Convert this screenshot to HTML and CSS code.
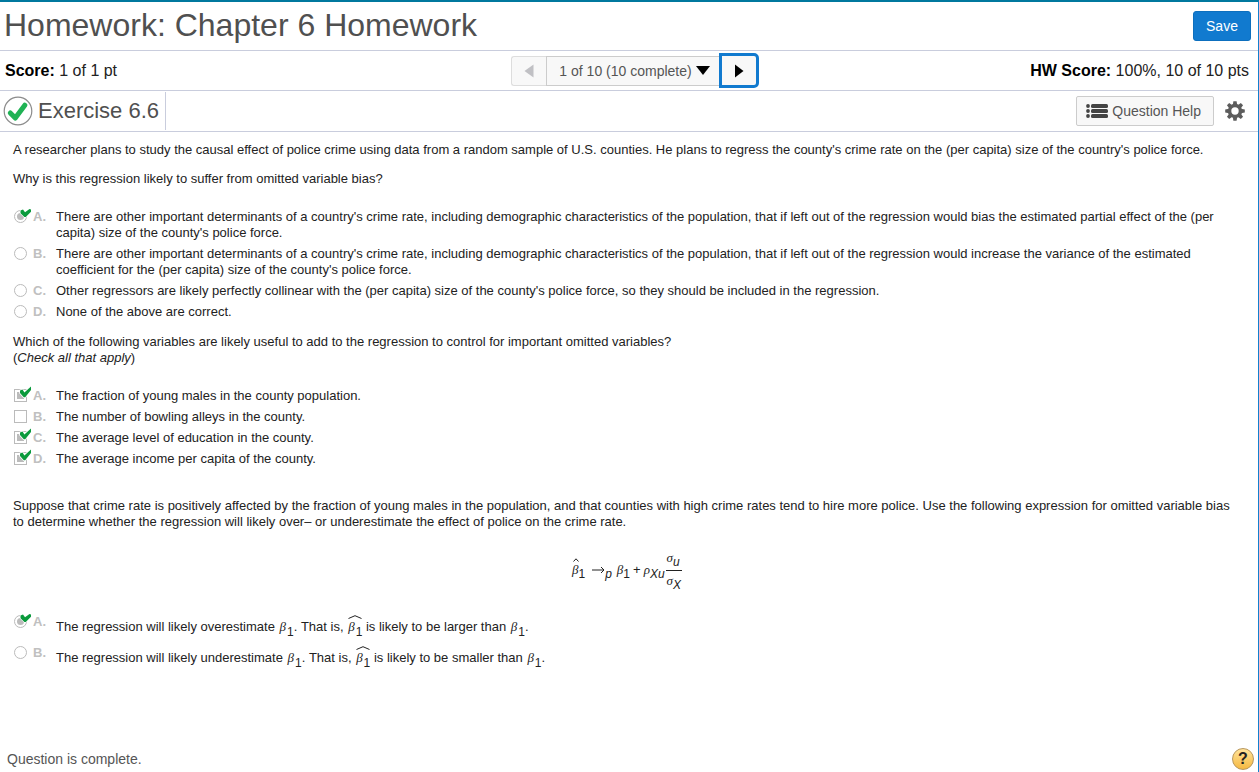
FILE: index.html
```html
<!DOCTYPE html>
<html lang="en">
<head>
<meta charset="utf-8">
<title>Homework: Chapter 6 Homework</title>
<link rel="stylesheet" href="styles.css">
</head>
<body>
<svg class="defs" aria-hidden="true">
  <symbol id="tick" viewBox="0 0 13 13"><path d="M1 4.500 L3.500 3.600 L5.400 6.400 L12 0.500 V4 L6.200 11.200 H4.800 L1 7 Z" fill="#0a9a3c" stroke="#fff" stroke-width="1.600" paint-order="stroke"/></symbol>
  <symbol id="tick-small" viewBox="0 0 13 13"><path d="M1.500 3.500 L4 2.600 L6 5.200 L10.500 2 L12 2.600 V4.800 L6.800 10 H5.400 L1.500 6.200 Z" fill="#0a9a3c" stroke="#fff" stroke-width="1.200" paint-order="stroke"/></symbol>
</svg>
<header class="title-bar">
  <h1>Homework: Chapter 6 Homework</h1>
  <button class="save" type="button">Save</button>
</header>
<div class="score-bar">
  <p class="score"><b>Score:</b> 1 of 1 pt</p>
  <nav class="pager" aria-label="Questions">
    <button class="prev" type="button" aria-label="Previous" disabled><svg width="10" height="14" viewBox="0 0 10 14"><path d="M9.500 0.500V13.500L0.500 7Z" fill="#c0c0c4"/></svg></button>
    <button class="current" type="button">1 of 10 (10 complete) <svg width="14" height="9" viewBox="0 0 14 9"><path d="M0 0H14L7 9Z"/></svg></button>
    <button class="next" type="button" aria-label="Next"><svg width="10" height="14" viewBox="0 0 10 14"><path d="M1 0.500V13.500L9.500 7Z"/></svg></button>
  </nav>
  <p class="score total"><b>HW Score:</b> 100%, 10 of 10 pts</p>
</div>
<div class="exercise-bar">
  <div class="exercise">
    <svg width="30" height="30" viewBox="0 0 30 30"><circle cx="15" cy="15" r="13.800" fill="#fff" stroke="#8c8c8c" stroke-width="1.200"/><path d="M7.300 17 L12.300 22 L21.800 9.200" fill="none" stroke="#1fb254" stroke-width="5" stroke-linecap="round" stroke-linejoin="round"/></svg>
    <h2>Exercise 6.6</h2>
  </div>
  <div class="tools">
    <button class="help" type="button"><svg width="22" height="14" viewBox="0 0 22 14" fill="#444"><circle cx="2" cy="2" r="1.900"/><circle cx="2" cy="7" r="1.900"/><circle cx="2" cy="12" r="1.900"/><rect x="5" width="17" height="4" rx="1.500"/><rect x="5" y="5" width="17" height="4" rx="1.500"/><rect x="5" y="10" width="17" height="4" rx="1.500"/></svg>Question Help</button>
    <button class="gear" type="button" aria-label="Settings"><svg width="20" height="20" viewBox="-10 -10 20 20"><g fill="#5c5c5c"><g id="teeth"><path d="M-2.200 -6 L-1.600 -9.800 H1.600 L2.200 -6 V6 L1.600 9.800 H-1.600 L-2.200 6Z"/><path transform="rotate(90)" d="M-2.200 -6 L-1.600 -9.800 H1.600 L2.200 -6 V6 L1.600 9.800 H-1.600 L-2.200 6Z"/></g><use href="#teeth" transform="rotate(45)"/><circle r="7.200"/></g><circle r="3.700" fill="#fff"/></svg></button>
  </div>
</div>
<main>
  <p>A researcher plans to study the causal effect of police crime using data from a random sample of U.S. counties. He plans to regress the county's crime rate on the (per capita) size of the country's police force.</p>
  <fieldset>
    <legend>Why is this regression likely to suffer from omitted variable bias?</legend>
    <div class="options">
      <div class="option"><span class="mark"><input type="radio" name="q1" id="q1a" checked disabled><svg class="tick"><use href="#tick-small"/></svg></span><b>A.</b><label for="q1a">There are other important determinants of a country's crime rate, including demographic characteristics of the population, that if left out of the regression would bias the estimated partial effect of the (per capita) size of the county's police force.</label></div>
      <div class="option"><span class="mark"><input type="radio" name="q1" id="q1b" disabled></span><b>B.</b><label for="q1b">There are other important determinants of a country's crime rate, including demographic characteristics of the population, that if left out of the regression would increase the variance of the estimated coefficient for the (per capita) size of the county's police force.</label></div>
      <div class="option"><span class="mark"><input type="radio" name="q1" id="q1c" disabled></span><b>C.</b><label for="q1c">Other regressors are likely perfectly collinear with the (per capita) size of the county's police force, so they should be included in the regression.</label></div>
      <div class="option"><span class="mark"><input type="radio" name="q1" id="q1d" disabled></span><b>D.</b><label for="q1d">None of the above are correct.</label></div>
    </div>
  </fieldset>
  <fieldset>
    <legend>Which of the following variables are likely useful to add to the regression to control for important omitted variables?<br>(<i>Check all that apply</i>)</legend>
    <div class="options">
      <div class="option"><span class="mark"><input type="checkbox" id="q2a" checked disabled><svg class="tick"><use href="#tick"/></svg></span><b>A.</b><label for="q2a">The fraction of young males in the county population.</label></div>
      <div class="option"><span class="mark"><input type="checkbox" id="q2b" disabled></span><b>B.</b><label for="q2b">The number of bowling alleys in the county.</label></div>
      <div class="option"><span class="mark"><input type="checkbox" id="q2c" checked disabled><svg class="tick"><use href="#tick"/></svg></span><b>C.</b><label for="q2c">The average level of education in the county.</label></div>
      <div class="option"><span class="mark"><input type="checkbox" id="q2d" checked disabled><svg class="tick"><use href="#tick"/></svg></span><b>D.</b><label for="q2d">The average income per capita of the county.</label></div>
    </div>
  </fieldset>
  <fieldset class="bias">
    <legend>Suppose that crime rate is positively affected by the fraction of young males in the population, and that counties with high crime rates tend to hire more police. Use the following expression for omitted variable bias to determine whether the regression will likely over– or underestimate the effect of police on the crime rate.</legend>
    <div class="formula">
      <span class="hatted"><svg class="hat" width="6" height="4" viewBox="0 0 6 4"><path d="M0.500 3.500L3 0.800L5.500 3.500"/></svg><var>β</var></span><sub>1</sub>
      <svg class="arrow" width="13" height="8" viewBox="0 0 13 8"><path d="M0 4H12M9 1L12 4L9 7" fill="none" stroke="#222"/></svg><sub><i>p</i></sub>
      <span class="term"><var>β</var><sub>1</sub></span><span class="plus">+</span><var>ρ</var><sub><i>Xu</i></sub>
      <span class="fraction"><span><var>σ</var><sub><i>u</i></sub></span><span><var>σ</var><sub><i>X</i></sub></span></span>
    </div>
    <div class="options math">
      <div class="option"><span class="mark"><input type="radio" name="q3" id="q3a" checked disabled><svg class="tick"><use href="#tick-small"/></svg></span><b>A.</b><label for="q3a">The regression will likely overestimate <var>β</var><sub>1</sub>. That is, <span class="hatted"><svg class="hat" width="14" height="4" viewBox="0 0 14 4"><path d="M0.500 3.500L7 0.700L13.500 3.500"/></svg><var>β</var><sub>1</sub></span> is likely to be larger than <var>β</var><sub>1</sub>.</label></div>
      <div class="option"><span class="mark"><input type="radio" name="q3" id="q3b" disabled></span><b>B.</b><label for="q3b">The regression will likely underestimate <var>β</var><sub>1</sub>. That is, <span class="hatted"><svg class="hat" width="14" height="4" viewBox="0 0 14 4"><path d="M0.500 3.500L7 0.700L13.500 3.500"/></svg><var>β</var><sub>1</sub></span> is likely to be smaller than <var>β</var><sub>1</sub>.</label></div>
    </div>
  </fieldset>
</main>
<footer>
  <p>Question is complete.</p>
  <button class="hint" type="button" aria-label="Help">?</button>
</footer>
</body>
</html>
```

FILE: styles.css
```css
* { box-sizing: border-box; }
body {
  display: flex;
  flex-direction: column;
  min-height: 100vh;
  margin: 0;
  border-top: 2px solid #00789e;
  border-right: 1px solid #1280d0;
  background: #fff;
  color: #222;
  font: 13px/16px "Liberation Sans", Arial, sans-serif;
}
h1, h2, p { margin: 0; font-weight: normal; }
button { font: inherit; margin: 0; padding: 0; cursor: pointer; }
button svg { display: block; }
.defs { display: none; }

.title-bar, .score-bar, .exercise-bar {
  display: flex;
  align-items: center;
  justify-content: space-between;
  border-bottom: 1px solid #c9cddd;
}
.title-bar { height: 49px; padding: 0 7px 0 4px; }
h1 { color: #505050; font-size: 32px; line-height: 40px; padding-bottom: 2px; }
.save {
  width: 58px;
  height: 30px;
  border: 1px solid #0d6fbe;
  border-radius: 3px;
  background: #117acf;
  color: #fff;
  font-size: 14px;
}

.score-bar { height: 40px; padding: 0 9px 0 5px; }
.score { flex: 1; color: #222; font-size: 16px; line-height: 20px; }
.score b { color: #000; }
.total { text-align: right; }
.pager { display: flex; align-items: center; margin-left: 16px; color: #555; font-size: 14px; }
.pager button { display: flex; align-items: center; justify-content: center; height: 30px; border: 1px solid #ccc; background: #f8f8f8; color: inherit; }
.pager .prev { width: 35px; border-color: #ddd; border-right: 0; border-radius: 3px 0 0 3px; }
.pager .current { gap: 4px; padding: 0 9px 0 12px; border-right: 0; }
.pager .next { width: 40px; height: 35px; border: 3px solid #117acf; border-radius: 0 5px 5px 0; }

.exercise-bar { height: 41px; padding: 0 13px 0 3px; }
.exercise { display: flex; align-items: center; gap: 5px; height: 38px; padding-right: 6px; border-right: 1px solid #c9cddd; }
h2 { color: #505050; font-size: 22px; line-height: 28px; }
.tools { display: flex; align-items: center; gap: 11px; }
.help { display: flex; align-items: center; gap: 4px; height: 30px; padding: 0 12px 0 9px; border: 1px solid #ccc; border-radius: 2px; background: #f8f8f8; color: #555; font-size: 14px; }
.gear { border: 0; background: none; }

main { flex: 1; padding: 10px 13px; }
fieldset { min-width: 0; margin: 13px 0 0; padding: 0; border: 0; }
legend { padding: 0 12px 0 0; }
fieldset + fieldset { margin-top: 14px; }
fieldset.bias { margin-top: 31px; }
.options { display: grid; gap: 5px; padding-top: 22px; }
.option { display: grid; grid-template-columns: 20px 23px 1fr; }
.option b { color: #c0c0c0; }
.mark { position: relative; height: 16px; padding: 1px; }
.mark input { display: block; appearance: none; width: 13px; height: 13px; margin: 0; border: 1px solid #bbb; background: #fff; }
.mark input[type="radio"] { border-radius: 50%; }
.mark input:checked { background: #bbb; background-clip: content-box; padding: 2px; }
.tick { position: absolute; top: -2px; left: 6px; width: 13px; height: 13px; }

var, .formula i { font-style: italic; }
var { font-family: "Liberation Serif", "Times New Roman", serif; }
sub { font-size: 12px; line-height: 0; vertical-align: -5px; }
.formula sub { line-height: 16px; padding-top: 8px; }
label var { padding: 0 1px; }
.hatted { position: relative; }
.hat { position: absolute; top: -4px; left: 1px; fill: none; stroke: #222; }
.formula { display: flex; align-items: center; justify-content: center; height: 44px; margin: 18px 4px 0 0; }
.arrow { margin-left: 7px; }
.term { display: flex; margin-left: 5px; }
.plus { margin: 0 3px; }
.formula > sub, .term > sub { margin-top: 0; }
.term { height: 24px; padding-top: 4px; }
.term sub { padding-top: 4px; }
.fraction { display: grid; margin-left: 1px; }
.fraction > span { display: flex; height: 20px; padding: 0 1px; }
.fraction sub { padding-top: 4px; }
.fraction > span + span { border-top: 1px solid #222; padding-top: 2px; }
.math { gap: 15px; padding-top: 22px; }
.math label { padding-top: 5px; margin-bottom: -5px; }

footer { display: flex; align-items: center; justify-content: space-between; padding: 0 4px 2px 7px; color: #555; font-size: 14px; }
.hint {
  width: 22px;
  height: 22px;
  border: 1px solid #b9975b;
  border-radius: 50%;
  background: linear-gradient(#ffe39a, #f5b942);
  color: #222;
  font-size: 16px;
  font-weight: bold;
  line-height: 20px;
}
```
